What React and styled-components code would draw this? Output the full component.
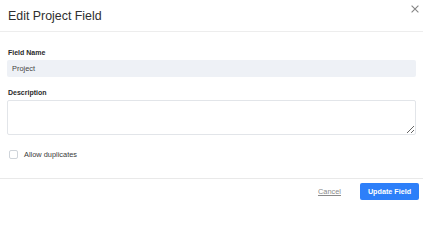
import React from "react";
import styled, { createGlobalStyle } from "styled-components";

const Global = createGlobalStyle`
  html, body { margin: 0; padding: 0; background: #fff; }
  body { font-family: "Liberation Sans", Arial, sans-serif; color: #333; }
  * { box-sizing: border-box; }
`;

const Dialog = styled.div`
  width: 423px;
  height: 205px;
  display: flex;
  flex-direction: column;
  background: #fff;
`;

const Header = styled.div`
  height: 32px;
  display: flex;
  justify-content: space-between;
  align-items: center;
  padding: 0 4px 0 8px;
  border-bottom: 1px solid #ededed;
`;

const Title = styled.h1`
  margin: 0;
  font-size: 12.4px;
  font-weight: 400;
  color: #2f2f2f;
  line-height: 16px;
`;

const CloseButton = styled.button`
  align-self: flex-start;
  margin-top: 5px;
  padding: 0;
  border: 0;
  background: none;
  width: 8px;
  height: 8px;
  display: flex;
  cursor: pointer;
`;

const Body = styled.div`
  flex: 1;
  padding: 16px 7px 0 7px;
  display: flex;
  flex-direction: column;
`;

const Label = styled.label`
  display: block;
  font-size: 7px;
  font-weight: 700;
  line-height: 10px;
  color: #2a2a2a;
  padding-left: 1px;
  margin: ${(p) => (p.$first ? "0" : "11px")} 0 2px 0;
`;

const TextInput = styled.input`
  height: 17px;
  width: 100%;
  border: 0;
  border-radius: 2px;
  background: #eef1f6;
  padding: 0 5px;
  font-family: inherit;
  font-size: 7.4px;
  color: #444;
  outline: none;
`;

const TextArea = styled.textarea`
  display: block;
  height: 35px;
  width: 100%;
  border: 1px solid #e2e5e9;
  border-radius: 2px;
  background: #fff;
  padding: 4px 5px;
  font-family: inherit;
  font-size: 7.4px;
  color: #444;
  outline: none;
  resize: vertical;
`;

const CheckRow = styled.label`
  display: flex;
  align-items: center;
  gap: 6px;
  margin-top: 15px;
  padding-left: 2px;
  font-size: 7.4px;
  color: #3a3a3a;
  line-height: 9px;
`;

const Box = styled.span`
  width: 9px;
  height: 9px;
  border: 1px solid #cfd4da;
  border-radius: 2px;
  background: #fff;
`;

const Footer = styled.div`
  height: 27px;
  border-top: 1px solid #e9e9e9;
  display: flex;
  justify-content: flex-end;
  align-items: center;
  gap: 19px;
  padding: 0 4px 1px 0;
`;

const CancelLink = styled.button`
  border: 0;
  background: none;
  padding: 0;
  font-family: inherit;
  font-size: 7.4px;
  color: #8a8a8a;
  text-decoration: underline;
  cursor: pointer;
`;

const PrimaryButton = styled.button`
  height: 17px;
  width: 59px;
  border: 0;
  border-radius: 2px;
  background: #2d7ff9;
  color: #fff;
  font-family: inherit;
  font-size: 7.2px;
  font-weight: 700;
  padding: 0;
  cursor: pointer;
`;

export default function App() {
  return (
    <>
      <Global />
      <Dialog>
        <Header>
          <Title>Edit Project Field</Title>
          <CloseButton aria-label="Close">
            <svg width="8" height="8" viewBox="0 0 8 8">
              <path d="M0.6 0.6 L7.4 7.4 M7.4 0.6 L0.6 7.4" stroke="#858585" strokeWidth="1.1" fill="none" />
            </svg>
          </CloseButton>
        </Header>
        <Body>
          <Label $first>Field Name</Label>
          <TextInput defaultValue="Project" />
          <Label>Description</Label>
          <TextArea />
          <CheckRow>
            <Box />
            Allow duplicates
          </CheckRow>
        </Body>
        <Footer>
          <CancelLink>Cancel</CancelLink>
          <PrimaryButton>Update Field</PrimaryButton>
        </Footer>
      </Dialog>
    </>
  );
}
